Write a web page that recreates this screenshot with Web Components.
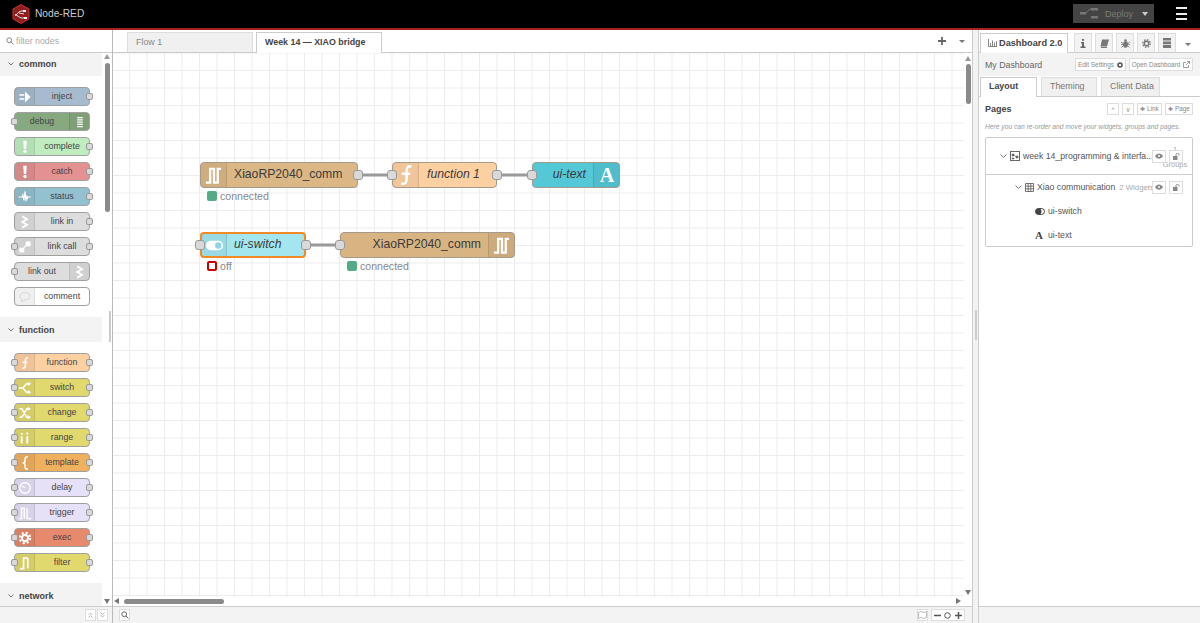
<!DOCTYPE html>
<html>
<head>
<meta charset="utf-8">
<title>Node-RED</title>
<style>
  html, body { margin: 0; height: 100%; overflow: hidden; background: #fff; }
  body { font-family: "Liberation Sans", Arial, sans-serif; color: #555; }
  #app { display: flex; flex-direction: column; width: 1200px; height: 623px; }
  #main { display: flex; flex: 1; min-height: 0; }
</style>
</head>
<body>
<div id="app">
  <app-header></app-header>
  <div id="main">
    <node-palette></node-palette>
    <flow-workspace></flow-workspace>
    <dash-sidebar></dash-sidebar>
  </div>
</div>

<script>
// node icons, all drawn in a 20x20 box
const s = (d, w = 2) => `<path d="${d}" fill="none" stroke="#fff" stroke-width="${w}"/>`;
const f = d => `<path d="${d}" fill="#fff"/>`;
const ICONS = {
  inject: f('M2 6h7v2.200H2zM2 11.800h7V14H2zM10 2l8 8-8 8z'),
  debug: f('M6 3h8v1.600H6zM6 6.200h8v1.600H6zM6 9.400h8v1.600H6zM6 12.600h8v1.600H6zM6 15.800h8v1.600H6z'),
  alert: f('M7.500 1h5l-.8 12H8.300z') + '<circle cx="10" cy="16.500" r="2.400" fill="#fff"/>',
  status: s('M1 10h5l1-3 1.500 8L10 2l1.500 14 1-8 1 4 1-2h4', 1.600),
  linkin: s('M6 2l7 4-7 4 7 4-7 4', 2.600),
  linkcall: f('M2 11h7v7H2zM11 2h7v7h-7z') + s('M8 11l4-3', 1.800),
  comment: '<ellipse cx="10" cy="9" rx="7.500" ry="5.200" fill="none" stroke="#ccc" stroke-width="1"/>' +
    '<path d="M6 13l-1.500 3.500L9.500 14" fill="#fff" stroke="#ccc" stroke-width="1"/>',
  func: s('M14.500 3.200C11.500 1.800 10.500 4 10.500 7v6.500c0 3-1.500 4.600-4.500 3.400M6.500 9h7', 2),
  swtch: s('M1 10h6l5-6h3M7 10l5 6h3', 2) + f('M14 1l5 3-5 3zM14 13l5 3-5 3z'),
  change: s('M2 4h3.500l7 12H15M2 16h3.500l7-12H15', 2) + f('M14 1l4.500 3L14 7zM14 13l4.500 3-4.500 3z'),
  range: f('M4 3h2.600v2.400H4zM4 7.600h2.600V18H4zM12 2h2.600v3H12zM12 7.600h2.600V18H12z'),
  template: s('M14 1C9.500 1 10 4.500 10 7c0 2-1 3-3.500 3C9 10 10 11 10 13c0 2.500-.5 6 4 6', 2.200),
  delay: '<circle cx="10" cy="10" r="7.500" fill="none" stroke="#fff" stroke-width="1.800"/>' + s('M10 10L5.500 7', 1.600),
  trigger: s('M1 18h4V3h4v15M13 3v15h6', 2),
  exec: '<circle cx="10" cy="10" r="4.400" fill="none" stroke="#fff" stroke-width="3"/>' +
    '<circle cx="10" cy="10" r="7.500" fill="none" stroke="#fff" stroke-width="2.800" stroke-dasharray="3 2.900"/>',
  filter: s('M3 18h5V3h6M14 3v15', 2.400),
  serial: s('M2 17.500h4.500V3h4v14.500h4V3H18', 2.400),
  toggle: '<rect x="1" y="5" width="18" height="10" rx="5" fill="#fff"/><circle cx="14" cy="10" r="3.400" fill="#8fd6e2"/>',
  letter: '<text x="10" y="16.500" text-anchor="middle" fill="#fff" font-family="Liberation Serif, serif" font-weight="700" font-size="20">A</text>'
};

class AppHeader extends HTMLElement {
  connectedCallback() {
    this.attachShadow({ mode: 'open' });
    this.shadowRoot.innerHTML = `
      <style>
        :host {
          display: flex;
          align-items: center;
          box-sizing: border-box;
          flex: none;
          height: 30px;
          background: #000;
          border-bottom: 2px solid #a82222;
          padding: 0 13px 1px 12px;
          color: #ccc;
          font-size: 10.2px;
        }
        .logo { margin-right: 5px; }
        .spacer { flex: 1; }
        .deploy {
          display: flex;
          align-items: center;
          width: 81px;
          height: 19px;
          background: #444;
          color: #7a7a7a;
          font-size: 9px;
        }
        .deploy svg { margin: 0 7px 0 7px; }
        .deploy i { margin-left: auto; margin-right: 6px; border: 3.5px solid transparent; border-top: 4px solid #ccc; border-bottom: 0; }
        .menu { margin-left: 22px; width: 11px; height: 9px; border-top: 2px solid #eee; border-bottom: 2px solid #eee; }
        .menu::after { content: ""; display: block; height: 2px; background: #eee; margin-top: 3.5px; }
      </style>
      <svg class="logo" width="18" height="20" viewBox="0 0 18 20">
        <path d="M9 .5l8 4.600v9.800l-8 4.600-8-4.600V5.100z" fill="#8f1f1f" stroke="#c33" stroke-width="1"/>
        <path d="M3 11c3 0 3-4 6-4h2M3 11c3 0 4 3 7 3h2M7 9l5 1" fill="none" stroke="#eee" stroke-width=".9"/>
        <rect x="11" y="6" width="3" height="2" fill="#eee"/><rect x="12" y="13" width="3" height="2" fill="#eee"/>
      </svg>
      <span>Node-RED</span>
      <span class="spacer"></span>
      <div class="deploy">
        <svg width="18" height="12" viewBox="0 0 18 12">
          <path d="M0 5h5M5 5c3 0 3-4 6-4" fill="none" stroke="#777"/>
          <rect x="0" y="4" width="6" height="2.500" fill="#777"/><rect x="11" y="0" width="7" height="2.500" fill="#777"/>
          <rect x="11" y="8" width="7" height="2.500" fill="#777"/>
        </svg>
        <span>Deploy</span><i></i>
      </div>
      <div class="menu"></div>`;
  }
}

class PaletteNode extends HTMLElement {
  connectedCallback() {
    const icon = this.getAttribute('icon');
    const side = this.getAttribute('side') || 'left';
    const color = this.getAttribute('color');
    this.attachShadow({ mode: 'open' });
    this.shadowRoot.innerHTML = `
      <style>
        :host { display: block; position: relative; width: 76px; height: 19px; margin: 0 0 6px 14px; }
        .body {
          display: flex;
          flex-direction: ${side === 'right' ? 'row-reverse' : 'row'};
          box-sizing: border-box;
          height: 100%;
          border: 1px solid #a0a0a0;
          border-radius: 4px;
          background: ${color};
          overflow: hidden;
        }
        .icon {
          display: flex;
          align-items: center;
          justify-content: center;
          flex: none;
          width: 19px;
          background: rgba(0,0,0,.06);
          ${side === 'right' ? 'border-left' : 'border-right'}: 1px solid rgba(0,0,0,.08);
        }
        .label { flex: 1; text-align: center; font-size: 8.8px; line-height: 17px; color: #444; }
        .port {
          position: absolute;
          top: 6px;
          width: 7px;
          height: 7px;
          box-sizing: border-box;
          background: #d9d9d9;
          border: 1px solid #999;
          border-radius: 2px;
        }
        .in { left: -3px; }
        .out { right: -3px; }
      </style>
      <div class="body">
        <div class="icon"><svg width="14" height="14" viewBox="0 0 20 20">${ICONS[icon]}</svg></div>
        <div class="label"><slot></slot></div>
      </div>
      ${this.hasAttribute('in') ? '<div class="port in"></div>' : ''}
      ${this.hasAttribute('out') ? '<div class="port out"></div>' : ''}`;
  }
}

class PaletteCategory extends HTMLElement {
  connectedCallback() {
    this.attachShadow({ mode: 'open' });
    this.shadowRoot.innerHTML = `
      <style>
        :host { display: block; }
        :host(:first-child) { margin-top: -2px; }
        .head {
          display: flex;
          align-items: center;
          box-sizing: border-box;
          width: 102px;
          height: 25px;
          padding: 1px 0 0 8px;
          background: #f3f3f3;
          font-size: 9px;
          font-weight: 700;
          color: #444;
        }
        svg { margin-right: 5px; }
        .items { padding: 11px 0 5px; }
      </style>
      <div class="head">
        <svg width="6" height="4" viewBox="0 0 6 4"><path d="M.5.500L3 3 5.500.500" fill="none" stroke="#777"/></svg>
        ${this.getAttribute('name')}
      </div>
      <div class="items"><slot></slot></div>`;
  }
}

class NodePalette extends HTMLElement {
  connectedCallback() {
    this.attachShadow({ mode: 'open' });
    this.shadowRoot.innerHTML = `
      <style>
        :host {
          display: flex;
          flex-direction: column;
          flex: none;
          box-sizing: border-box;
          width: 113px;
          position: relative;
          border-right: 1px solid #bbb;
          background: #fff;
        }
        .filter {
          display: flex;
          align-items: center;
          flex: none;
          box-sizing: border-box;
          height: 23px;
          padding: 0 6px;
          border-bottom: 1px solid #ccc;
          font-size: 8.8px;
          color: #aaa;
          position: relative;
          z-index: 1;
          background: #fff;
        }
        .filter svg { margin-right: 2px; }
        .list { flex: 1; min-height: 0; overflow: hidden; }
        .foot {
          display: flex;
          justify-content: flex-end;
          gap: 1px;
          flex: none;
          box-sizing: border-box;
          height: 17px;
          padding: 2px 4px 0 0;
          background: #f3f3f3;
          border-top: 1px solid #ccc;
        }
        .foot span {
          display: flex;
          align-items: center;
          justify-content: center;
          width: 11px;
          height: 12px;
          background: #fff;
          border: 1px solid #ddd;
          box-sizing: border-box;
        }
        /* scrollbar and splitter lie over the list */
        .arrow { position: absolute; left: 104px; border: 3px solid transparent; }
        .up { top: 24px; border-bottom: 5px solid #999; border-top: 0; }
        .down { top: 569px; border-top: 5px solid #777; border-bottom: 0; }
        .thumb { position: absolute; left: 105px; top: 33px; width: 5px; height: 149px; background: #8a8a8a; border-radius: 3px; }
        .grip { position: absolute; left: 108.5px; top: 281px; width: 2px; height: 31px; background: #ccc; }
      </style>
      <div class="filter">
        <svg width="8" height="8" viewBox="0 0 8 8"><circle cx="3.200" cy="3.200" r="2.400" fill="none" stroke="#888"/><path d="M5 5l2.500 2.500" stroke="#888"/></svg>
        filter nodes
      </div>
      <div class="list">
        <palette-category name="common">
          <palette-node icon="inject" color="#a6bbcf" out>inject</palette-node>
          <palette-node icon="debug" color="#87a980" side="right" in>debug</palette-node>
          <palette-node icon="alert" color="#c0edc0" out>complete</palette-node>
          <palette-node icon="alert" color="#e49191" out>catch</palette-node>
          <palette-node icon="status" color="#94c1d0" out>status</palette-node>
          <palette-node icon="linkin" color="#dddddd" out>link in</palette-node>
          <palette-node icon="linkcall" color="#dddddd" in out>link call</palette-node>
          <palette-node icon="linkin" color="#dddddd" side="right" in>link out</palette-node>
          <palette-node icon="comment" color="#ffffff">comment</palette-node>
        </palette-category>
        <palette-category name="function">
          <palette-node icon="func" color="#fdd0a2" in out>function</palette-node>
          <palette-node icon="swtch" color="#e2d96e" in out>switch</palette-node>
          <palette-node icon="change" color="#e2d96e" in out>change</palette-node>
          <palette-node icon="range" color="#e2d96e" in out>range</palette-node>
          <palette-node icon="template" color="#f0b15f" in out>template</palette-node>
          <palette-node icon="delay" color="#e6e0f8" in out>delay</palette-node>
          <palette-node icon="trigger" color="#e6e0f8" in out>trigger</palette-node>
          <palette-node icon="exec" color="#e6896c" in out>exec</palette-node>
          <palette-node icon="filter" color="#e2d96e" in out>filter</palette-node>
        </palette-category>
        <palette-category name="network"></palette-category>
      </div>
      <div class="foot">
        <span><svg width="5" height="6" viewBox="0 0 5 6"><path d="M.5 3L2.500 1l2 2M.5 5.500l2-2 2 2" fill="none" stroke="#aaa" stroke-width=".8"/></svg></span>
        <span><svg width="5" height="6" viewBox="0 0 5 6"><path d="M.5.500l2 2 2-2M.5 3l2 2 2-2" fill="none" stroke="#aaa" stroke-width=".8"/></svg></span>
      </div>
      <i class="arrow up"></i><i class="arrow down"></i><div class="thumb"></div><div class="grip"></div>`;
  }
}

// a node on the flow canvas: its place on the canvas is its content
class FlowNode extends HTMLElement {
  connectedCallback() {
    const a = n => this.getAttribute(n);
    const side = a('side') || 'left';
    const selected = this.hasAttribute('selected');
    this.attachShadow({ mode: 'open' });
    this.shadowRoot.innerHTML = `
      <style>
        :host { display: block; position: absolute; left: ${a('x')}px; top: ${a('y')}px; width: ${a('w')}px; height: 26px; }
        .body {
          display: flex;
          flex-direction: ${side === 'right' ? 'row-reverse' : 'row'};
          box-sizing: border-box;
          height: 100%;
          border: ${selected ? '2px solid #f08a24' : '1px solid #a59a8a'};
          border-radius: 4px;
          background: ${a('color')};
          overflow: hidden;
        }
        .icon {
          display: flex;
          align-items: center;
          justify-content: center;
          flex: none;
          width: ${selected ? 24 : 25}px;
          background: rgba(0,0,0,.05);
          ${side === 'right' ? 'border-left' : 'border-right'}: 1px solid rgba(0,0,0,.1);
        }
        .label {
          flex: 1;
          text-align: ${a('align') || 'center'};
          font-size: 12.2px;
          line-height: ${selected ? 21 : 23}px;
          color: #3a3a3a;
          white-space: nowrap;
          ${a('pad') ? 'padding: ' + a('pad') + ';' : ''}
          ${this.hasAttribute('italic') ? 'font-style: italic;' : ''}
        }
        .port {
          position: absolute;
          top: 8px;
          width: 10px;
          height: 10px;
          box-sizing: border-box;
          background: #d9d9d9;
          border: 1px solid #999;
          border-radius: 3px;
        }
        .in { left: -5px; }
        .out { right: -5px; }
        .status {
          position: absolute;
          left: 7px;
          top: 28px;
          display: flex;
          align-items: center;
          gap: 3px;
          font-size: 10.6px;
          color: #888;
          white-space: nowrap;
        }
        .dot { width: 10px; height: 10px; box-sizing: border-box; border-radius: 2px; background: ${a('status-color') || '#5a8'}; }
        .dot.ring { background: #fff; border: 2.5px solid #c00; }
      </style>
      <div class="body">
        <div class="icon"><svg width="${a('isize') || 19}" height="${a('isize') || 19}" viewBox="0 0 20 20">${ICONS[a('icon')]}</svg></div>
        <div class="label"><slot></slot></div>
      </div>
      ${this.hasAttribute('in') ? '<div class="port in"></div>' : ''}
      ${this.hasAttribute('out') ? '<div class="port out"></div>' : ''}
      ${a('status') ? `<div class="status"><span class="dot ${a('status-shape') || ''}"></span>${a('status')}</div>` : ''}`;
  }
}

class FlowWorkspace extends HTMLElement {
  connectedCallback() {
    this.attachShadow({ mode: 'open' });
    this.shadowRoot.innerHTML = `
      <style>
        :host {
          display: flex;
          flex-direction: column;
          flex: 1;
          min-width: 0;
          position: relative;
          background: #fff;
        }
        .tabs {
          display: flex;
          align-items: flex-end;
          gap: 3px;
          flex: none;
          box-sizing: border-box;
          height: 23px;
          padding-left: 14px;
          border-bottom: 1px solid #ccc;
          font-size: 8.9px;
        }
        .tab {
          box-sizing: border-box;
          width: 126px;
          height: 20px;
          padding: 4px 0 0 8px;
          background: #f0f0f0;
          border: 1px solid #ddd;
          border-bottom: 0;
          color: #888;
        }
        .tab.on { background: #fff; height: 21px; margin-bottom: -1px; color: #444; font-weight: 700; border-color: #ccc; }
        .tools { display: flex; align-items: center; gap: 13px; margin-left: auto; margin-right: 7px; height: 100%; }
        .tools i { border: 3px solid transparent; border-top: 3.5px solid #777; border-bottom: 0; }
        .canvas { flex: 1; position: relative; overflow: hidden; min-height: 0; }
        .grid {
          position: absolute;
          left: 0;
          top: 0;
          width: 851px;
          height: 544px;
          background-image: linear-gradient(#ececec 1px, transparent 1px), linear-gradient(90deg, #ececec 1px, transparent 1px);
          background-size: 17.5px 17.5px;
          background-position: 16px 17px;
        }
        svg.wires { position: absolute; left: 0; top: 0; }
        .foot {
          display: flex;
          align-items: center;
          flex: none;
          box-sizing: border-box;
          height: 17px;
          padding: 0 7px 0 6px;
          background: #f3f3f3;
          border-top: 1px solid #ccc;
        }
        .btn {
          display: flex;
          align-items: center;
          justify-content: center;
          box-sizing: border-box;
          width: 11px;
          height: 12px;
          background: #fff;
          border: 1px solid #ddd;
        }
        .zoom { display: flex; align-items: center; justify-content: space-around; box-sizing: border-box; width: 34px; height: 12px; margin-left: 3px; background: #fff; border: 1px solid #ddd; }
        .spacer { flex: 1; }
        /* canvas scrollbars */
        .thumb { position: absolute; background: #8a8a8a; border-radius: 3px; }
        .v { left: 853px; top: 11px; width: 5px; height: 40px; }
        .h { left: 11px; top: 546px; width: 100px; height: 5px; }
        .ar { position: absolute; width: 0; height: 0; border: 3px solid transparent; }
      </style>
      <div class="tabs">
        <div class="tab">Flow 1</div>
        <div class="tab on">Week 14 — XIAO bridge</div>
        <div class="tools">
          <svg width="8" height="8" viewBox="0 0 8 8"><path d="M4 0v8M0 4h8" stroke="#666" stroke-width="1.800"/></svg>
          <i></i>
        </div>
      </div>
      <div class="canvas">
        <div class="grid"></div>
        <svg class="wires" width="859" height="553">
          <path d="M245 122h34M384 122h35M192 192h35" fill="none" stroke="#999" stroke-width="3"/>
        </svg>
        <flow-node x="87" y="109" w="158" icon="serial" color="#dcb786" out status="connected" pad="0 0 0 7px" align="left">XiaoRP2040_comm</flow-node>
        <flow-node x="279" y="109" w="105" icon="func" isize="24" color="#fdd0a2" in out italic pad="0 0 0 8px" align="left">function 1</flow-node>
        <flow-node x="419" y="109" w="88" icon="letter" color="#55c8d8" in side="right" italic isize="20" align="right" pad="0 7px 0 0">ui-text</flow-node>
        <flow-node x="87" y="179" w="106" icon="toggle" color="#a3e6ef" out in selected italic status="off" status-shape="ring" pad="0 0 0 7px" align="left">ui-switch</flow-node>
        <flow-node x="227" y="179" w="175" icon="serial" color="#d9b483" in side="right" status="connected" align="right" pad="0 7px 0 0">XiaoRP2040_comm</flow-node>
        <div class="thumb v"></div>
        <div class="thumb h"></div>
        <i class="ar" style="left:852px;top:3px;border-bottom:5px solid #999;border-top:0"></i>
        <i class="ar" style="left:852px;top:537px;border-top:5px solid #777;border-bottom:0"></i>
        <i class="ar" style="left:1px;top:545px;border-right:5px solid #777;border-left:0"></i>
        <i class="ar" style="left:843px;top:545px;border-left:5px solid #777;border-right:0"></i>
      </div>
      <div class="foot">
        <div class="btn"><svg width="8" height="8" viewBox="0 0 8 8"><circle cx="3.200" cy="3.200" r="2.400" fill="none" stroke="#666"/><path d="M5 5l2.500 2.500" stroke="#666"/></svg></div>
        <span class="spacer"></span>
        <div class="btn"><svg width="9" height="8" viewBox="0 0 9 8"><path d="M.5 1.500l2.700-1 2.600 1 2.700-1v6l-2.700 1-2.600-1-2.700 1z" fill="none" stroke="#aaa" stroke-width=".8"/></svg></div>
        <div class="zoom">
          <svg width="7" height="7" viewBox="0 0 7 7"><path d="M0 3.500h7" stroke="#555" stroke-width="1.500"/></svg>
          <svg width="7" height="7" viewBox="0 0 7 7"><circle cx="3.500" cy="3.500" r="2.800" fill="none" stroke="#555"/></svg>
          <svg width="7" height="7" viewBox="0 0 7 7"><path d="M3.500 0v7M0 3.500h7" stroke="#555" stroke-width="1.500"/></svg>
        </div>
      </div>`;
  }
}

class DashSidebar extends HTMLElement {
  connectedCallback() {
    const eye = `<span class="mini"><svg width="8" height="6" viewBox="0 0 8 6"><path d="M0 3c2-3.500 6-3.500 8 0-2 3.500-6 3.500-8 0z" fill="#888"/><circle cx="4" cy="3" r="1" fill="#fff"/></svg></span>`;
    const lock = `<span class="mini"><svg width="8" height="7" viewBox="0 0 8 7"><rect x="1" y="3" width="4.500" height="4" fill="#888"/><path d="M4 3V1.500c0-1.500 3-1.500 3 0V2.500" fill="none" stroke="#888"/></svg></span>`;
    const chev = `<svg width="7" height="5" viewBox="0 0 7 5"><path d="M.5.500l3 3 3-3" fill="none" stroke="#777"/></svg>`;
    this.attachShadow({ mode: 'open' });
    this.shadowRoot.innerHTML = `
      <style>
        :host {
          display: flex;
          flex-direction: column;
          flex: none;
          box-sizing: border-box;
          width: 228px;
          height: 100%;
          position: relative;
          border-left: 1px solid #ccc;
          padding-left: 5px;
          background: linear-gradient(90deg, #f3f3f3 5px, #fff 5px);
          font-size: 9px;
          color: #555;
        }
        .pane { display: flex; flex-direction: column; flex: 1; min-height: 0; border-left: 1px solid #ccc; background: #fff; }
        .grip { position: absolute; left: 2px; top: 280px; width: 2px; height: 30px; background: #ccc; }
        .top {
          display: flex;
          align-items: flex-end;
          flex: none;
          box-sizing: border-box;
          height: 23px;
          padding-left: 1px;
          border-bottom: 1px solid #ccc;
        }
        .main-tab {
          display: flex;
          align-items: center;
          gap: 2px;
          box-sizing: border-box;
          width: 88px;
          height: 20px;
          margin-bottom: -1px;
          padding: 0 0 2px 7px;
          background: #fff;
          border: 1px solid #ccc;
          border-bottom: 0;
          color: #444;
          font-weight: 700;
          font-size: 9.2px;
          white-space: nowrap;
        }
        .ico {
          display: flex;
          align-items: center;
          justify-content: center;
          box-sizing: border-box;
          width: 18px;
          height: 20px;
          margin-bottom: -1px;
          margin-left: 3px;
          background: #f3f3f3;
          border: 1px solid #ddd;
          border-bottom: 1px solid #ccc;
        }
        .ico.first { margin-left: 6px; }
        .caret { margin: 0 0 6px 9px; border: 3px solid transparent; border-top: 3.5px solid #777; border-bottom: 0; }
        .title {
          display: flex;
          align-items: center;
          flex: none;
          gap: 3px;
          box-sizing: border-box;
          height: 23px;
          padding: 0 7px 0 6px;
          background: #f3f3f3;
          font-size: 8.8px;
          color: #666;
        }
        .title b { flex: 1; font-weight: 400; }
        .small {
          display: flex;
          align-items: center;
          justify-content: center;
          gap: 3px;
          box-sizing: border-box;
          height: 13px;
          background: #fff;
          border: 1px solid #ddd;
          font-size: 6.4px;
          color: #888;
          white-space: nowrap;
        }
        .subtabs { display: flex; align-items: flex-end; gap: 4px; flex: none; box-sizing: border-box; height: 21px; padding-left: 1px; border-bottom: 1px solid #ccc; }
        .sub {
          box-sizing: border-box;
          height: 19px;
          padding: 3px 0 0 8px;
          background: #f0f0f0;
          border: 1px solid #ddd;
          border-bottom: 0;
          color: #777;
          font-size: 8.9px;
        }
        .sub.on { height: 20px; margin-bottom: -1px; background: #fff; border-color: #ccc; color: #444; font-weight: 700; }
        .pages { display: flex; align-items: center; gap: 3px; flex: none; height: 12px; margin-top: 6px; padding: 0 7px 0 6px; }
        .pages b { flex: 1; color: #444; font-size: 9px; }
        .pages .small { height: 12px; }
        .hint { flex: none; margin: 8px 0 0 6px; font-size: 6.7px; font-style: italic; color: #999; white-space: nowrap; }
        .tree { flex: none; box-sizing: border-box; width: 208px; height: 110px; margin: 7px 0 0 6px; border: 1px solid #ccc; border-radius: 2px; }
        .row { display: flex; align-items: center; position: relative; font-size: 8.7px; color: #555; white-space: nowrap; }
        .r1 { height: 36px; padding-left: 14px; border-bottom: 1px solid #ccc; gap: 3px; }
        .r2 { height: 24px; padding-left: 29px; gap: 3px; }
        .r3 { height: 24px; padding-left: 49px; gap: 3px; }
        .mini {
          display: flex;
          align-items: center;
          justify-content: center;
          box-sizing: border-box;
          width: 14px;
          height: 13px;
          background: #fff;
          border: 1px solid #ddd;
        }
        .acts { display: flex; gap: 3px; position: absolute; right: 9px; top: 50%; margin-top: -6.5px; }
        .count { color: #aaa; font-size: 7.8px; margin-left: 1px; }
        .groups { position: absolute; left: 174px; top: 4px; width: 30px; text-align: center; font-size: 7.5px; line-height: 15px; color: #aaa; }
        .a { font: 700 11px "Liberation Serif", serif; color: #444; width: 10px; }
      </style>
      <div class="grip"></div>
      <div class="pane">
        <div class="top">
          <div class="main-tab">
            <svg width="9" height="8" viewBox="0 0 9 8"><path d="M.5 0v7.500H9M2.500 7V4M4.500 7V1.500M6.500 7V3.500M8.500 7V2" fill="none" stroke="#777" stroke-width=".9"/></svg>
            Dashboard 2.0
          </div>
          <div class="ico first"><svg width="6" height="9" viewBox="0 0 6 9"><path d="M2 0h2v1.800H2zM1 3h3v4.500h1.500V9H.5V7.500H2V4.200H1z" fill="#666"/></svg></div>
          <div class="ico"><svg width="9" height="9" viewBox="0 0 9 9"><path d="M2 .5h7L7 7.500H.5z" fill="#777"/><path d="M1 8.500h6" stroke="#777"/></svg></div>
          <div class="ico"><svg width="9" height="9" viewBox="0 0 9 9"><ellipse cx="4.500" cy="5.500" rx="2.500" ry="3.300" fill="#777"/><circle cx="4.500" cy="1.500" r="1.300" fill="#777"/><path d="M0 3l2 1.500M9 3L7 4.500M0 5.500h2M9 5.500H7M.5 8.500l1.500-1.500M8.500 8.500L7 7" stroke="#777" stroke-width=".8"/></svg></div>
          <div class="ico"><svg width="9" height="9" viewBox="0 0 9 9"><circle cx="4.500" cy="4.500" r="2.200" fill="none" stroke="#777" stroke-width="1.400"/><circle cx="4.500" cy="4.500" r="3.700" fill="none" stroke="#777" stroke-width="1.400" stroke-dasharray="1.500 1.400"/></svg></div>
          <div class="ico"><svg width="8" height="10" viewBox="0 0 8 10"><path d="M0 0h8v2.500H0zM0 3.400h8v2.800H0zM0 7h8v3H0z" fill="#777"/></svg></div>
          <i class="caret"></i>
        </div>
        <div class="title">
          <b>My Dashboard</b>
          <span class="small" style="width:51px">Edit Settings <svg width="6" height="6" viewBox="0 0 9 9"><circle cx="4.500" cy="4.500" r="3" fill="none" stroke="#555" stroke-width="2.400"/></svg></span>
          <span class="small" style="width:64px">Open Dashboard <svg width="7" height="7" viewBox="0 0 7 7"><path d="M5.500 4v2.500h-5v-5H3M3 4l3.500-3.500M4 .5h2.500V3" fill="none" stroke="#777" stroke-width=".7"/></svg></span>
        </div>
        <div class="subtabs">
          <div class="sub on" style="width:57px">Layout</div>
          <div class="sub" style="width:56px">Theming</div>
          <div class="sub" style="width:59px">Client Data</div>
        </div>
        <div class="pages">
          <b>Pages</b>
          <span class="small" style="width:12px">^</span>
          <span class="small" style="width:12px">v</span>
          <span class="small" style="width:25px">✚ Link</span>
          <span class="small" style="width:28px">✚ Page</span>
        </div>
        <div class="hint">Here you can re-order and move your widgets, groups and pages.</div>
        <div class="tree">
          <div class="row r1">
            ${chev}
            <svg width="10" height="10" viewBox="0 0 10 10"><rect x=".5" y=".5" width="9" height="9" fill="none" stroke="#666"/><path d="M2 3h2v2H2zM6 5h2v2H6zM2 7h2v1H2zM4 4l2 2" fill="#666" stroke="#666" stroke-width=".6"/></svg>
            <span>week 14_programming &amp; interfa...</span>
            <div class="groups">1<br>Groups</div>
            <div class="acts">${eye}${lock}</div>
          </div>
          <div class="row r2">
            ${chev}
            <svg width="9" height="9" viewBox="0 0 9 9"><path d="M.5.500h8v8h-8zM.5 3.200h8M.5 5.800h8M3.200.500v8M5.800.500v8" fill="none" stroke="#555" stroke-width=".8"/></svg>
            <span>Xiao communication</span><span class="count">2 Widgets</span>
            <div class="acts">${eye}${lock}</div>
          </div>
          <div class="row r3">
            <svg width="10" height="7" viewBox="0 0 10 7"><rect x=".5" y=".5" width="9" height="6" rx="3" fill="#fff" stroke="#444"/><circle cx="3.500" cy="3.500" r="3" fill="#444"/></svg>
            <span>ui-switch</span>
          </div>
          <div class="row r3">
            <span class="a">A</span>
            <span>ui-text</span>
          </div>
        </div>
        <div style="flex:1"></div>
        <div style="flex:none;height:17px;background:#f3f3f3;border-top:1px solid #ccc;box-sizing:border-box"></div>
      </div>`;
  }
}

customElements.define('app-header', AppHeader);
customElements.define('palette-node', PaletteNode);
customElements.define('palette-category', PaletteCategory);
customElements.define('node-palette', NodePalette);
customElements.define('flow-node', FlowNode);
customElements.define('flow-workspace', FlowWorkspace);
customElements.define('dash-sidebar', DashSidebar);
</script>
</body>
</html>
